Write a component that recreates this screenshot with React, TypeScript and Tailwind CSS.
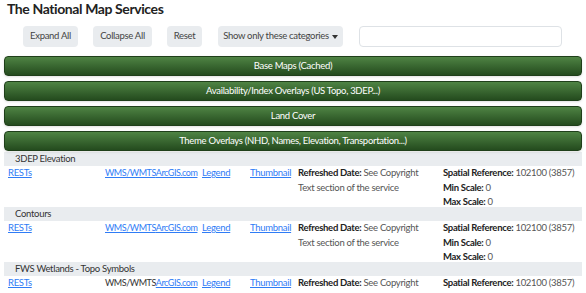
import React from "react"

const categories = [
  "Base Maps (Cached)",
  "Availability/Index Overlays (US Topo, 3DEP...)",
  "Land Cover",
  "Theme Overlays (NHD, Names, Elevation, Transportation...)",
]

const services = [
  { name: "3DEP Elevation", wmsLink: true },
  { name: "Contours", wmsLink: true },
  { name: "FWS Wetlands - Topo Symbols", wmsLink: false },
]

function ServiceRow({ name, wmsLink }: { name: string; wmsLink: boolean }) {
  return (
    <div>
      <div className="bg-[#e9ecef] h-[14px] leading-[14px] pl-[11px] text-[#333]">{name}</div>
      <div className="grid grid-cols-[97px_97px_48px_48px_145px_1fr] pl-[4px] h-[41px] leading-[14.5px]">
        <div>
          <a href="#" className="text-[#2f7cf6] underline">RESTs</a>
        </div>
        <div className="whitespace-nowrap text-[9px] tracking-[-0.45px]">
          {wmsLink ? (
            <a href="#" className="text-[#2f7cf6] underline">WMS/WMTS</a>
          ) : (
            <span className="text-[#333]">WMS/WMTS</span>
          )}
          <a href="#" className="text-[#2f7cf6] underline">ArcGIS.com</a>
        </div>
        <div>
          <a href="#" className="text-[#2f7cf6] underline">Legend</a>
        </div>
        <div>
          <a href="#" className="text-[#2f7cf6] underline">Thumbnail</a>
        </div>
        <div className="text-[#555] pr-2">
          <span className="font-bold text-[#222]">Refreshed Date:</span> See Copyright Text section of the service
        </div>
        <div className="text-[#555]">
          <div><span className="font-bold text-[#222]">Spatial Reference:</span> 102100 (3857)</div>
          <div><span className="font-bold text-[#222]">Min Scale:</span> 0</div>
          <div><span className="font-bold text-[#222]">Max Scale:</span> 0</div>
        </div>
      </div>
    </div>
  )
}

export default function App() {
  return (
    <main className="w-[586px] h-[293px] overflow-hidden bg-white text-[9.5px] tracking-[-0.3px] font-['Lato',sans-serif]">
      <h1 className="pl-[7px] text-[14px] tracking-[-0.4px] leading-[18px] font-bold text-[#222]">
        The National Map Services
      </h1>

      <div className="flex items-center mt-[8px] pl-[23px] h-[21px] whitespace-nowrap">
        <button className="h-[21px] w-[55px] rounded bg-[#e9ecef] text-[#444]">Expand All</button>
        <button className="h-[21px] w-[59px] ml-[15px] rounded bg-[#e9ecef] text-[#444]">Collapse All</button>
        <button className="h-[21px] w-[35px] ml-[15px] rounded bg-[#e9ecef] text-[#444]">Reset</button>
        <button className="h-[21px] w-[125px] ml-[16px] rounded bg-[#e9ecef] text-[#444] flex items-center justify-center gap-[3px]">
          Show only these categories
          <span className="inline-block border-x-[3px] border-x-transparent border-t-[4px] border-t-[#333]"></span>
        </button>
        <input className="h-[21px] w-[203px] ml-[16px] rounded border border-[#dee2e6] bg-white" />
      </div>

      <div className="mt-[9px] px-[4px] flex flex-col gap-[5px]">
        {categories.map((c) => (
          <div
            key={c}
            className="h-[20px] rounded-[4px] border border-[#1f3f1a] bg-gradient-to-b from-[#4f8444] to-[#244b1e] text-white text-center leading-[18px] shadow-sm"
          >
            {c}
          </div>
        ))}
      </div>

      <div className="mt-[1px] px-[4px]">
        {services.map((s) => (
          <ServiceRow key={s.name} name={s.name} wmsLink={s.wmsLink} />
        ))}
      </div>
    </main>
  )
}
